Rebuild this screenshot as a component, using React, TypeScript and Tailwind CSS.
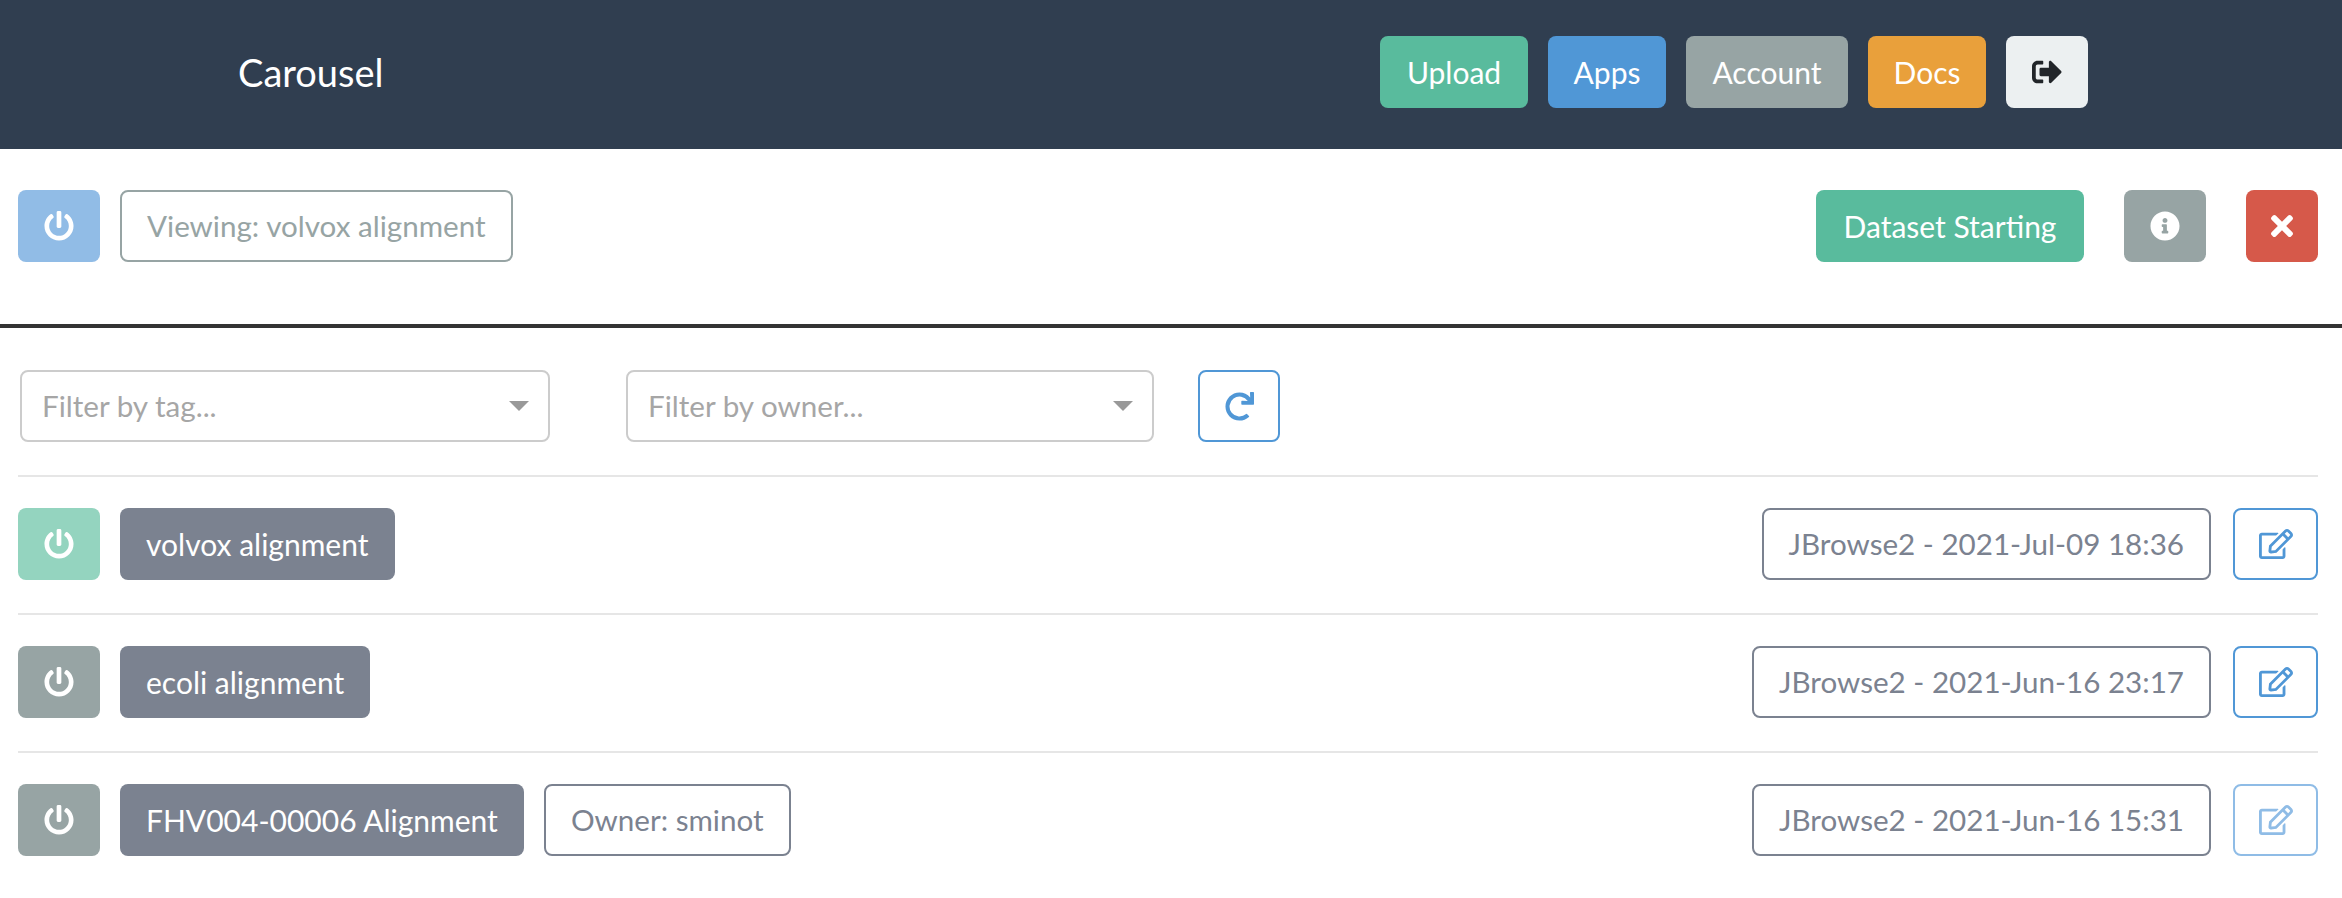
import { FaInfoCircle, FaPowerOff, FaRedo, FaRegEdit, FaSignOutAlt, FaTimes } from "react-icons/fa";

const rows = [
  { name: "volvox alignment", date: "JBrowse2 - 2021-Jul-09 18:36", power: "bg-[#94d4bf]" },
  { name: "ecoli alignment", date: "JBrowse2 - 2021-Jun-16 23:17", power: "bg-[#97a4a4]" },
  { name: "FHV004-00006 Alignment", date: "JBrowse2 - 2021-Jun-16 15:31", power: "bg-[#97a4a4]", owner: "sminot", faded: true },
];

function NavButton({ label, className }: { label: string; className: string }) {
  return (
    <button className={`h-[72px] rounded-lg text-white text-[30px] ${className}`}>{label}</button>
  );
}

function PowerButton({ color }: { color: string }) {
  return (
    <button className={`h-[72px] w-[82px] rounded-lg flex items-center justify-center text-white ${color}`}>
      <FaPowerOff className="text-[30px]" />
    </button>
  );
}

function Outline({ label, border, text }: { label: string; border: string; text: string }) {
  return (
    <div className={`h-[72px] px-[25px] rounded-lg border-2 flex items-center bg-white ${border} ${text}`}>{label}</div>
  );
}

function FilterSelect({ label, width }: { label: string; width: string }) {
  return (
    <div className={`h-[72px] rounded-lg border-2 border-[#cccccc] flex items-center justify-between pl-[20px] pr-[19px] text-[#a6a6a6] ${width}`}>
      <span>{label}</span>
      <span className="w-0 h-0 border-x-[10px] border-x-transparent border-t-[10px] border-t-[#999999]" />
    </div>
  );
}

export default function App() {
  return (
    <div className="min-h-[898px] bg-white text-[29.6px] font-['Lato',sans-serif] overflow-hidden">
      {/* Navbar */}
      <header className="h-[149px] bg-[#303e50] flex items-start pt-9 pl-[238px] pr-[254px] text-white">
        <span className="h-[72px] flex items-center text-[38px]">Carousel</span>
        <div className="ml-auto flex gap-5">
          <NavButton label="Upload" className="w-[148px] bg-[#59bb9d]" />
          <NavButton label="Apps" className="w-[118px] bg-[#5097d6]" />
          <NavButton label="Account" className="w-[162px] bg-[#97a4a4]" />
          <NavButton label="Docs" className="w-[118px] bg-[#e9a03b]" />
          <button className="h-[72px] w-[82px] rounded-lg bg-[#ecf0f1] flex items-center justify-center text-[#212529]">
            <FaSignOutAlt className="text-[30px]" />
          </button>
        </div>
      </header>

      {/* Current dataset */}
      <section className="h-[179px] pt-[41px] pr-6 pl-[18px] border-b-4 border-[#333333] flex items-start gap-5">
        <PowerButton color="bg-[#91bce6]" />
        <Outline label="Viewing: volvox alignment" border="border-[#97a4a4]" text="text-[#97a4a4]" />
        <button className="ml-auto h-[72px] w-[268px] rounded-lg bg-[#59bb9d] text-white text-[30px]">Dataset Starting</button>
        <button className="ml-5 h-[72px] w-[82px] rounded-lg bg-[#97a4a4] text-white flex items-center justify-center">
          <FaInfoCircle className="text-[30px]" />
        </button>
        <button className="ml-5 h-[72px] w-[72px] rounded-lg bg-[#d6594a] text-white flex items-center justify-center">
          <FaTimes className="text-[32px]" />
        </button>
      </section>

      {/* Filters */}
      <section className="pt-[42px] pb-[33px] pl-5 flex items-center">
        <FilterSelect label="Filter by tag..." width="w-[530px]" />
        <div className="ml-[76px]">
          <FilterSelect label="Filter by owner..." width="w-[528px]" />
        </div>
        <button className="ml-[44px] h-[72px] w-[82px] rounded-lg border-2 border-[#5097d6] text-[#5097d6] flex items-center justify-center">
          <FaRedo className="text-[29px]" />
        </button>
      </section>

      {/* Dataset rows */}
      <section className="ml-[18px] mr-6 border-t-2 border-[#e6e6e6]">
        {rows.map((r, i) => (
          <div key={r.name} className={`h-[138px] pt-[31px] flex items-start gap-5 ${i < rows.length - 1 ? "border-b-2 border-[#e6e6e6]" : ""}`}>
            <PowerButton color={r.power} />
            <div className="h-[72px] px-[26px] rounded-lg bg-[#7b8290] text-white text-[30px] flex items-center">{r.name}</div>
            {r.owner && <Outline label={`Owner: ${r.owner}`} border="border-[#7b8290]" text="text-[#7b8290]" />}
            <div className="ml-auto mr-[2px]">
              <Outline label={r.date} border="border-[#7b8290]" text="text-[#7b8290]" />
            </div>
            <button className={`h-[72px] w-[85px] rounded-lg border-2 flex items-center justify-center ${r.faded ? "border-[#8fbce6] text-[#8fbce6]" : "border-[#5097d6] text-[#5097d6]"}`}>
              <FaRegEdit className="text-[34px]" />
            </button>
          </div>
        ))}
      </section>
    </div>
  );
}
